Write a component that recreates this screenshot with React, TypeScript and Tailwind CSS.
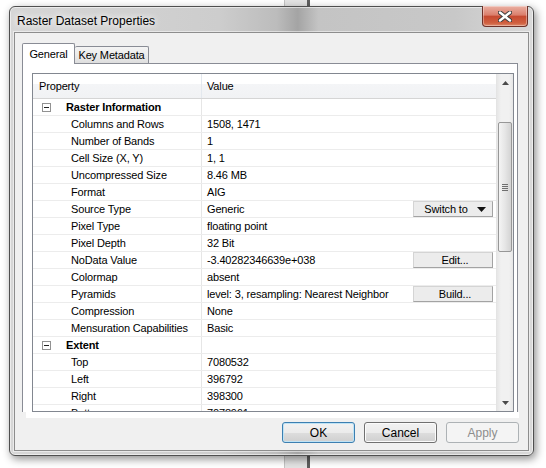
import React from "react";

type Action = "switch" | "edit" | "build";

interface PropRow {
  name: string;
  value?: string;
  group?: boolean;
  action?: Action;
}

const rows: PropRow[] = [
  { name: "Raster Information", group: true },
  { name: "Columns and Rows", value: "1508, 1471" },
  { name: "Number of Bands", value: "1" },
  { name: "Cell Size (X, Y)", value: "1, 1" },
  { name: "Uncompressed Size", value: "8.46 MB" },
  { name: "Format", value: "AIG" },
  { name: "Source Type", value: "Generic", action: "switch" },
  { name: "Pixel Type", value: "floating point" },
  { name: "Pixel Depth", value: "32 Bit" },
  { name: "NoData Value", value: "-3.40282346639e+038", action: "edit" },
  { name: "Colormap", value: "absent" },
  { name: "Pyramids", value: "level: 3, resampling: Nearest Neighbor", action: "build" },
  { name: "Compression", value: "None" },
  { name: "Mensuration Capabilities", value: "Basic" },
  { name: "Extent", group: true },
  { name: "Top", value: "7080532" },
  { name: "Left", value: "396792" },
  { name: "Right", value: "398300" },
  { name: "Bottom", value: "7078961" },
];

const Arrow = ({ down }: { down?: boolean }) => (
  <svg width="7" height="4" viewBox="0 0 7 4" className={down ? "rotate-180" : ""}>
    <path d="M0 4 L3.5 0 L7 4 Z" fill="#4a4a4a" />
  </svg>
);

const CellButton = ({ action }: { action: Action }) => {
  const label = action === "switch" ? "Switch to" : action === "edit" ? "Edit..." : "Build...";
  return (
    <div className="mr-[3px] flex h-[16px] w-[80px] shrink-0 items-center justify-center gap-[9px] border border-[#d4d4d4] border-b-[#a3a3a3] border-r-[#a3a3a3] bg-[#ececec] pl-[4px]">
      <span>{label}</span>
      {action === "switch" && (
        <svg width="9" height="5" viewBox="0 0 9 5">
          <path d="M0 0 L9 0 L4.5 5 Z" fill="#111" />
        </svg>
      )}
    </div>
  );
};

const GridRow = ({ row }: { row: PropRow }) => (
  <div className="flex h-[17px] shrink-0 border-b border-[#ececec]">
    <div className="flex w-[169px] shrink-0 items-center border-r border-[#e6e6e6]">
      {row.group ? (
        <>
          <span className="ml-[9px] flex h-[9px] w-[9px] items-center justify-center border border-[#929292] bg-white">
            <span className="h-px w-[5px] bg-[#222]" />
          </span>
          <span className="ml-[15px] font-bold">{row.name}</span>
        </>
      ) : (
        <span className="pl-[38px] whitespace-nowrap">{row.name}</span>
      )}
    </div>
    <div className="flex flex-1 items-center justify-between pl-[5px]">
      <span className="whitespace-nowrap">{row.value}</span>
      {row.action && <CellButton action={row.action} />}
    </div>
  </div>
);

const DialogButton = ({ label, kind }: { label: string; kind: "default" | "normal" | "disabled" }) => {
  const look =
    kind === "default"
      ? "border-[#3c7fb1] bg-[linear-gradient(180deg,#f2f2f2_0%,#ebebeb_50%,#dddddd_51%,#cfcfcf_100%)] shadow-[inset_0_0_0_1px_#bfe3f5] text-black"
      : kind === "normal"
      ? "border-[#707070] bg-[linear-gradient(180deg,#f2f2f2_0%,#ebebeb_50%,#dddddd_51%,#cfcfcf_100%)] shadow-[inset_0_0_0_1px_#fbfbfb] text-black"
      : "border-[#adb2b5] bg-[#f4f4f4] text-[#8d8d8d]";
  return (
    <div className={`flex h-[21px] w-[73px] items-center justify-center rounded-[3px] border text-[12px] ${look}`}>
      {label}
    </div>
  );
};

export default function App() {
  return (
    <div className="relative h-[468px] w-[546px] overflow-hidden bg-white font-['Liberation_Sans',Arial,sans-serif] text-black">
      {/* window behind the dialog */}
      <div className="absolute left-[284px] top-0 h-full w-[26px] border-l border-r-[3px] border-l-[#c4c4c4] border-r-[#5e5e5e] bg-[#e3e3e3]" />

      {/* dialog frame */}
      <div className="relative ml-[9px] mt-[6px] flex h-[450px] w-[525px] flex-col rounded-[6px] border border-[#4f4f4f] bg-[linear-gradient(90deg,#d6d6d6_0%,#cdcdcd_40%,#bcbcbc_51%,#a4a4a4_55%,#c4c4c4_59%,#c8c8c8_85%,#d9d9d9_100%)] shadow-[2px_3px_8px_rgba(0,0,0,0.45),inset_0_0_0_1px_rgba(255,255,255,0.55)]">
        {/* title bar */}
        <div className="flex h-[25px] shrink-0 items-start justify-between">
          <span className="ml-[7px] mt-[7px] text-[12px] leading-[14px] [text-shadow:0_0_6px_#fff,0_0_10px_#fff]">
            Raster Dataset Properties
          </span>
          <div className="-mt-px mr-[5px] flex h-[21px] w-[46px] items-center justify-center rounded-b-[4px] border border-t-0 border-[#6e3128] bg-[linear-gradient(180deg,#eab0a3_0%,#db7f6c_45%,#c64a31_52%,#d0603f_85%,#de8a6c_100%)] shadow-[inset_0_0_0_1px_rgba(255,255,255,0.35)]">
            <svg width="14" height="11" viewBox="0 0 14 11">
              <path d="M2 1.5 L12 9.5 M12 1.5 L2 9.5" stroke="#3d3d3d" strokeWidth="4.4" strokeLinecap="round" />
              <path d="M2 1.5 L12 9.5 M12 1.5 L2 9.5" stroke="#ffffff" strokeWidth="2.4" strokeLinecap="round" />
            </svg>
          </div>
        </div>

        {/* client area */}
        <div className="mb-[4px] ml-[4px] mr-[4px] flex flex-1 flex-col border border-[#8d8d8d] bg-[#f0f0f0] text-[11px] tracking-[-0.15px] shadow-[0_0_0_1px_rgba(255,255,255,0.5)]">
          {/* tabs */}
          <div className="relative z-10 -mb-px ml-[7px] mt-[10px] flex h-[21px] items-end">
            <div className="flex h-[21px] w-[53px] items-center justify-center rounded-t-[2px] border border-b-0 border-[#898c95] bg-white">
              General
            </div>
            <div className="mb-px flex h-[17px] w-[74px] items-center justify-center rounded-t-[2px] border border-b-0 border-l-0 border-[#898c95] bg-[linear-gradient(180deg,#f4f4f4_0%,#ebebeb_50%,#dedede_100%)]">
              Key Metadata
            </div>
          </div>

          {/* tab page */}
          <div className="ml-[7px] h-[349px] w-[496px] border border-b-0 border-[#898c95] bg-white pl-[9px] pt-[9px]">
            {/* property grid */}
            <div className="flex h-[339px] w-[482px] border border-[#828790] bg-white">
              <div className="flex flex-1 flex-col overflow-hidden">
                <div className="flex h-[25px] shrink-0 border-b border-[#d5d5d5] bg-[linear-gradient(180deg,#ffffff_0%,#ffffff_40%,#f4f5f7_41%,#f1f2f4_100%)]">
                  <div className="flex w-[169px] items-center border-r border-[#e3e8ee] pl-[6px]">Property</div>
                  <div className="flex flex-1 items-center pl-[5px]">Value</div>
                </div>
                {rows.map((r) => (
                  <GridRow key={r.name} row={r} />
                ))}
              </div>

              {/* vertical scrollbar */}
              <div className="flex w-[17px] shrink-0 flex-col border-l border-[#e4e4e4] bg-[linear-gradient(90deg,#e6e6e6,#f1f1f1_25%,#f1f1f1_75%,#e6e6e6)]">
                <div className="flex h-[17px] items-center justify-center">
                  <Arrow />
                </div>
                <div className="ml-[1px] mt-[31px] flex h-[130px] w-[14px] flex-col items-center justify-center gap-[1px] rounded-[2px] border border-[#979797] bg-[linear-gradient(90deg,#f4f4f4,#e6e6e6_50%,#d3d3d3)]">
                  <span className="h-px w-[6px] bg-[#6f6f6f]" />
                  <span className="h-px w-[6px] bg-[#6f6f6f]" />
                  <span className="h-px w-[6px] bg-[#6f6f6f]" />
                  <span className="h-px w-[6px] bg-[#6f6f6f]" />
                </div>
                <div className="flex-1" />
                <div className="flex h-[17px] items-center justify-center">
                  <Arrow down />
                </div>
              </div>
            </div>
          </div>
          <div className="ml-[11px] mr-[9px] h-[6px] bg-white" />

          {/* dialog buttons */}
          <div className="mt-[4px] flex justify-end gap-[9px] pr-[9px] tracking-normal">
            <DialogButton label="OK" kind="default" />
            <DialogButton label="Cancel" kind="normal" />
            <DialogButton label="Apply" kind="disabled" />
          </div>
        </div>
      </div>
    </div>
  );
}
